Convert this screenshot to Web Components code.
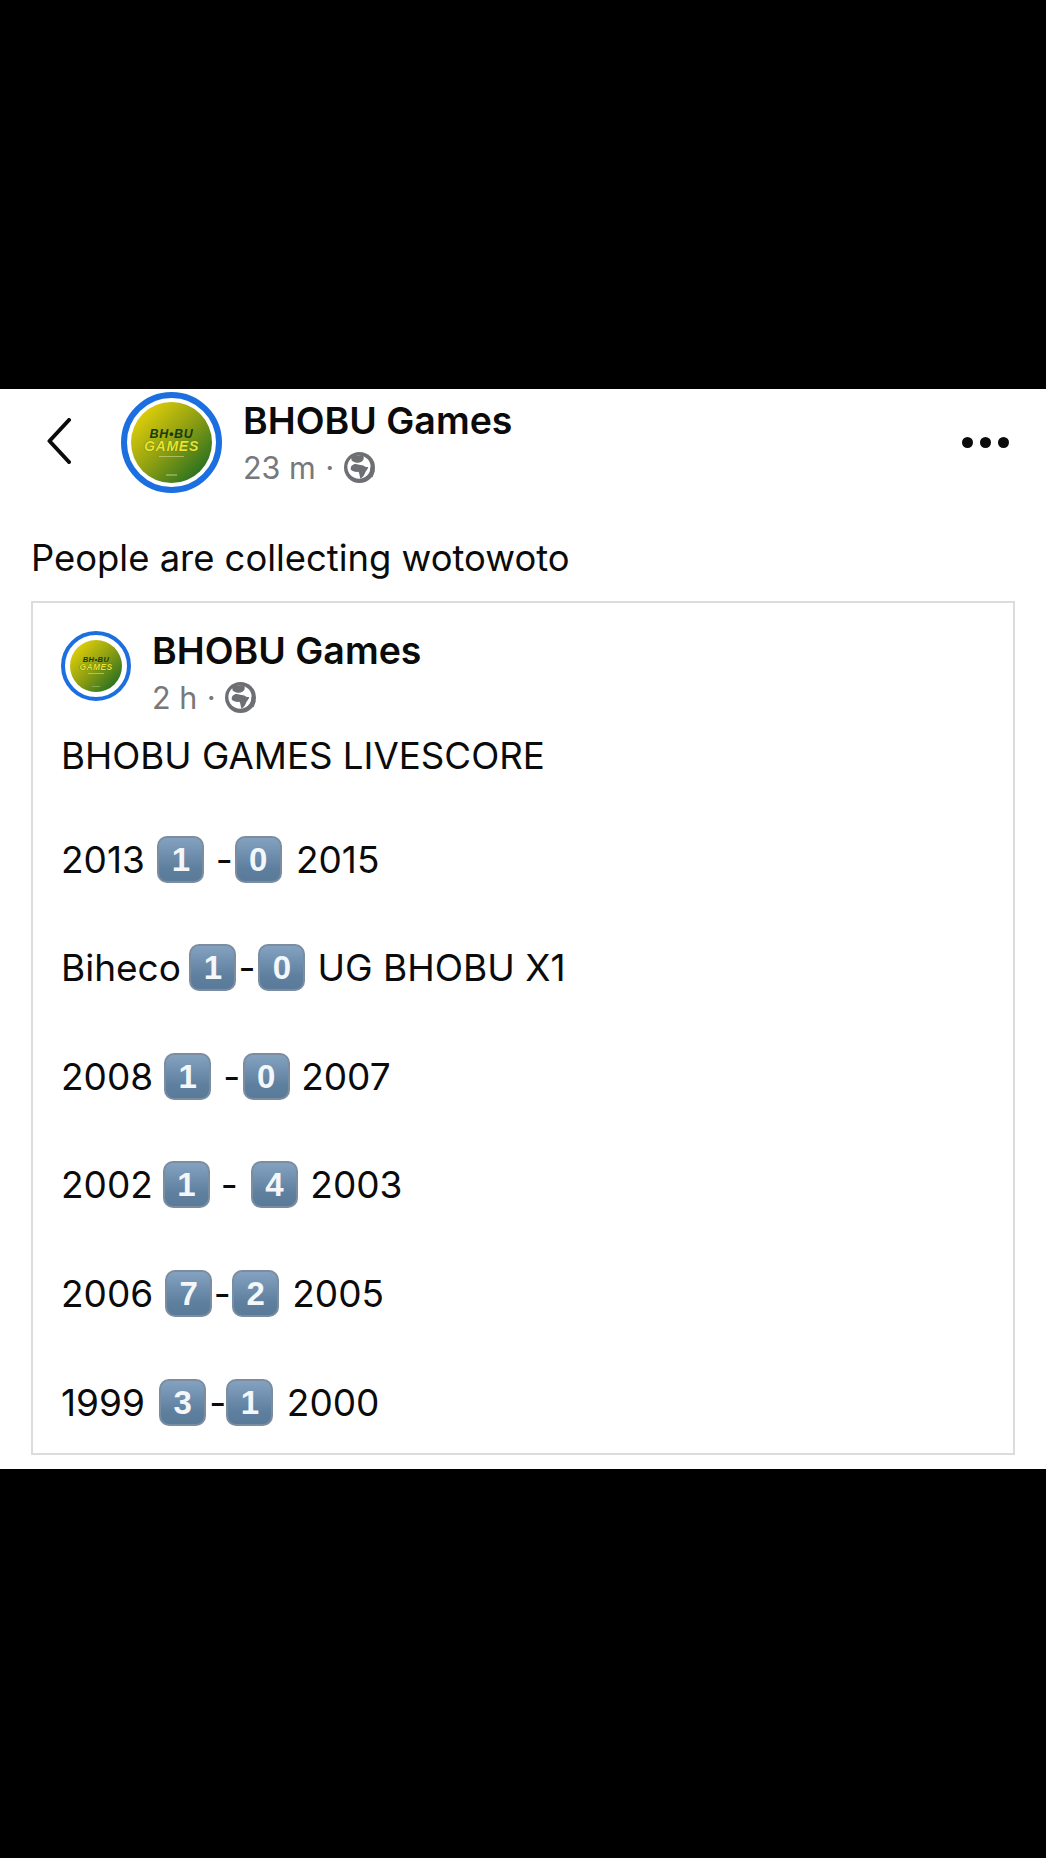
<!DOCTYPE html>
<html lang="en">
<head>
<meta charset="utf-8">
<title>BHOBU Games</title>
<style>
html, body { margin: 0; padding: 0; background: #000; }
body { font-family: Inter, "Liberation Sans", sans-serif; }
</style>
</head>
<body>
<phone-frame>
  <post-header name="BHOBU Games" time="23 m"></post-header>
  <post-text>People are collecting wotowoto</post-text>
  <shared-card>
    <card-header name="BHOBU Games" time="2 h"></card-header>
    <score-title>BHOBU GAMES LIVESCORE</score-title>
    <score-row left="2013" a="1" b="0" right="2015" gaps="12.500 11.400 2 14.200"></score-row>
    <score-row left="Biheco" a="1" b="0" right="UG BHOBU X1" gaps="8.500 2 3 12"></score-row>
    <score-row left="2008" a="1" b="0" right="2007" gaps="11 12 2.500 11.500"></score-row>
    <score-row left="2002" a="1" b="4" right="2003" gaps="10 11 13 12.500"></score-row>
    <score-row left="2006" a="7" b="2" right="2005" gaps="12 1.500 1.500 13"></score-row>
    <score-row left="1999" a="3" b="1" right="2000" gaps="14.400 3 0 13.500"></score-row>
  </shared-card>
</phone-frame>

<script>
// black bars above and below the white screenshot area
class PhoneFrame extends HTMLElement {
  constructor() {
    super();
    this.attachShadow({ mode: "open" }).innerHTML = `
<style>
:host { display: block; width: 1046px; height: 1858px; padding: 389px 0 389px; box-sizing: border-box; background: #000; }
.screen { background: #fff; height: 1080px; box-sizing: border-box; padding: 3px 31px 14px; display: flex; flex-direction: column; color: #0b0b0b; }
</style>
<div class="screen"><slot></slot></div>`;
  }
}
customElements.define("phone-frame", PhoneFrame);

class GlobeIcon extends HTMLElement {
  constructor() {
    super();
    this.attachShadow({ mode: "open" }).innerHTML = `
<style>:host { display: block; width: 31px; height: 31px; flex: none; margin-top: -2px; } svg { display: block; width: 100%; height: 100%; }</style>
<svg viewBox="0 0 32 32">
  <circle cx="16" cy="16" r="16" fill="#6d6f73"/>
  <circle cx="15.500" cy="15.500" r="12" fill="#fff"/>
  <path fill="#6d6f73" d="M7 4 8 9c3 2 7 3 10 1 2-1 3-3 2-7z"/>
  <path fill="#6d6f73" d="M7 18c-.5-3 2-5.500 5-5.500 2 0 3 1 5 1 2.500 0 3.500.8 4.500 1.500 1 .7 2.500.6 3.500.5-.3 2-2 3.500-3 5.500-1 2.500-1.800 5-5 6.500-1-2.500-.8-5-2-7-3 .4-6.800-.5-8-2.500z"/>
  <path fill="#6d6f73" d="M29 13c-1 1-2.500 4-2 7 .3 2-1 4-2.500 6l5 0 2-6z"/>
</svg>`;
  }
}
customElements.define("globe-icon", GlobeIcon);

// ring, white gap, gradient disc with the page logo on it
class PageAvatar extends HTMLElement {
  constructor() {
    super();
    this.attachShadow({ mode: "open" }).innerHTML = `
<style>
:host { display: block; width: var(--size); height: var(--size); flex: none; }
.ring { width: 100%; height: 100%; box-sizing: border-box; border-radius: 50%; border: var(--ring) solid #1c6fde; padding: var(--pad); background: #fff; }
.disc { width: 100%; height: 100%; border-radius: 50%; background: linear-gradient(135deg, #e8d408 8%, #8f9f12 50%, #1c6b22 92%); display: flex; flex-direction: column; align-items: center; overflow: hidden; font: italic 700 var(--logo)/.92 "Liberation Sans", sans-serif; letter-spacing: .06em; padding-top: 33%; box-sizing: border-box; }
.top { color: #123d10; }
.bot { color: #f0e22c; font-size: 1.120em; text-shadow: 0 0 1px #1f5e1c; }
.tag { width: 30%; height: 1.500%; min-height: 1px; background: #d8e2a0; opacity: .55; margin-top: 3%; }
.foot { width: 14%; height: 3%; background: #b9c98a; opacity: .5; margin-top: 22%; }
</style>
<div class="ring"><div class="disc"><span class="top">BH&#8226;BU</span><span class="bot">GAMES</span><div class="tag"></div><div class="foot"></div></div></div>`;
  }
}
customElements.define("page-avatar", PageAvatar);

class PostHeader extends HTMLElement {
  constructor() {
    super();
    this.attachShadow({ mode: "open" }).innerHTML = `
<style>
:host { display: flex; align-items: flex-start; margin: 0 -31px; padding: 0 38px 0 47px; }
.back { width: 24px; height: 46px; margin: 26px 0 0; flex: none; }
page-avatar { --size: 101px; --ring: 6px; --pad: 4px; --logo: 12.500px; margin-left: 50px; }
.meta { margin-left: 21px; flex: 1; }
.name { font-size: 37.500px; font-weight: 600; line-height: 40px; margin-top: 9px; }
.sub { display: flex; align-items: center; font-size: 30.500px; line-height: 38px; color: #77787b; margin-top: 8px; }
.dot { margin: 0 10px; font-size: 24px; font-weight: 700; }
.more { display: flex; gap: 7px; margin: 45px -1px 0 0; }
.more i { width: 11px; height: 11px; border-radius: 50%; background: #0b0b0b; }
</style>
<svg class="back" viewBox="0 0 24 46" fill="none" stroke="#0b0b0b" stroke-width="4" stroke-linecap="round" stroke-linejoin="round"><path d="M22 2 2.500 23 22 44"/></svg>
<page-avatar></page-avatar>
<div class="meta">
  <div class="name">${this.getAttribute("name")}</div>
  <div class="sub"><span>${this.getAttribute("time")}</span><span class="dot">&middot;</span><globe-icon></globe-icon></div>
</div>
<div class="more"><i></i><i></i><i></i></div>`;
  }
}
customElements.define("post-header", PostHeader);

class PostText extends HTMLElement {
  constructor() {
    super();
    this.attachShadow({ mode: "open" }).innerHTML = `
<style>:host { display: block; font-size: 36.400px; line-height: 42px; margin-top: 44px; }</style>
<slot></slot>`;
  }
}
customElements.define("post-text", PostText);

class SharedCard extends HTMLElement {
  constructor() {
    super();
    this.attachShadow({ mode: "open" }).innerHTML = `
<style>:host { display: block; box-sizing: border-box; flex: 1; margin-top: 22px; border: 2px solid #dcdcdc; padding: 28px 28px 0; }</style>
<slot></slot>`;
  }
}
customElements.define("shared-card", SharedCard);

class CardHeader extends HTMLElement {
  constructor() {
    super();
    this.attachShadow({ mode: "open" }).innerHTML = `
<style>
:host { display: flex; align-items: flex-start; }
page-avatar { --size: 70px; --ring: 4px; --pad: 5px; --logo: 7.500px; }
.meta { margin-left: 21px; }
.name { font-size: 37.500px; font-weight: 600; line-height: 40px; }
.sub { display: flex; align-items: center; font-size: 30.500px; line-height: 38px; color: #77787b; margin-top: 8px; }
.dot { margin: 0 10px; font-size: 24px; font-weight: 700; }
</style>
<page-avatar></page-avatar>
<div class="meta">
  <div class="name">${this.getAttribute("name")}</div>
  <div class="sub"><span>${this.getAttribute("time")}</span><span class="dot">&middot;</span><globe-icon></globe-icon></div>
</div>`;
  }
}
customElements.define("card-header", CardHeader);

class ScoreTitle extends HTMLElement {
  constructor() {
    super();
    this.attachShadow({ mode: "open" }).innerHTML = `
<style>:host { display: block; font-size: 36.700px; line-height: 46px; margin-top: 16px; margin-bottom: -5px; }</style>
<slot></slot>`;
  }
}
customElements.define("score-title", ScoreTitle);

class KeyCap extends HTMLElement {
  constructor() {
    super();
    this.attachShadow({ mode: "open" }).innerHTML = `
<style>
:host { display: flex; align-items: center; justify-content: center; flex: none; box-sizing: border-box; width: 47px; height: 47px; border-radius: 10px; border: 2px solid #7c8da1; background: linear-gradient(#84a2c0, #5f7f9f 70%, #5a7a9a); color: #f4f7fa; font: 700 33px/1 "Liberation Sans", sans-serif; }
</style>
<slot></slot>`;
  }
}
customElements.define("key-cap", KeyCap);

// one result line: team, key cap, dash, key cap, team
class ScoreRow extends HTMLElement {
  constructor() {
    super();
    const g = this.getAttribute("gaps").split(" ");
    this.attachShadow({ mode: "open" }).innerHTML = `
<style>
:host { display: flex; align-items: center; height: 47px; margin-top: 61.600px; font-size: 37px; }
</style>
<span>${this.getAttribute("left")}</span>
<key-cap style="margin-left:${g[0]}px">${this.getAttribute("a")}</key-cap>
<span style="margin-left:${g[1]}px">-</span>
<key-cap style="margin-left:${g[2]}px">${this.getAttribute("b")}</key-cap>
<span style="margin-left:${g[3]}px">${this.getAttribute("right")}</span>`;
  }
}
customElements.define("score-row", ScoreRow);
</script>
</body>
</html>
